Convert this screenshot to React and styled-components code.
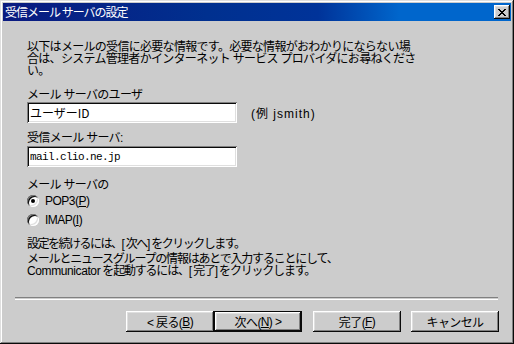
import styled, { createGlobalStyle } from "styled-components";

const GlobalStyle = createGlobalStyle`
  html, body {
    margin: 0;
    padding: 0;
    background: #cccccc;
  }
  body {
    font-family: "Liberation Sans", "Noto Sans CJK JP", sans-serif;
    font-size: 12px;
    color: #000;
  }
`;

const Window = styled.div`
  width: 514px;
  height: 344px;
  box-sizing: border-box;
  padding: 3px;
  background: #cccccc;
  box-shadow: inset -1px -1px #0a0a0a, inset 1px 1px #dfdfdf,
    inset -2px -2px #808080, inset 2px 2px #ffffff;
  display: flex;
  flex-direction: column;
`;

const TitleBar = styled.div`
  height: 18px;
  display: flex;
  align-items: center;
  justify-content: space-between;
  padding: 0 1px 0 2px;
  background: linear-gradient(
    90deg,
    #0a1a80 0%,
    #00308f 40%,
    #003399 62%,
    #0066cc 78%,
    #0066cc 100%
  );
  color: #fff;
`;

const TitleText = styled.span`
  font-family: "Noto Sans CJK JP", sans-serif;
  font-size: 12px;
  letter-spacing: -1px;
  line-height: 18px;
  white-space: nowrap;
`;

const CloseButton = styled.div`
  width: 16px;
  height: 14px;
  display: flex;
  align-items: center;
  justify-content: center;
  background: #cccccc;
  box-shadow: inset -1px -1px #0a0a0a, inset 1px 1px #ffffff,
    inset -2px -2px #808080, inset 2px 2px #dfdfdf;
`;

const Content = styled.div`
  display: flex;
  flex-direction: column;
  align-items: flex-start;
  padding: 20px 0 0 24px;
`;

const Text = styled.div`
  font-family: "Liberation Sans", "Noto Sans CJK JP", sans-serif;
  line-height: 12px;
  white-space: nowrap;
  letter-spacing: ${(p) => p.$spacing ?? "-0.7px"};
  margin-top: ${(p) => p.$top ?? 0}px;
`;

const Latin = styled.span`
  letter-spacing: ${(p) => p.$spacing ?? "-0.4px"};
`;

const FieldRow = styled.div`
  display: flex;
  align-items: center;
  gap: 14px;
  margin-top: ${(p) => p.$top ?? 0}px;
`;

const TextField = styled.input`
  width: 210px;
  height: 21px;
  box-sizing: border-box;
  border: none;
  outline: none;
  margin: 0;
  padding: 0 0 0 3px;
  background: #fff;
  color: #000;
  font-family: ${(p) =>
    p.$mono
      ? '"Liberation Mono", monospace'
      : '"Noto Sans CJK JP", sans-serif'};
  font-size: ${(p) => (p.$mono ? "11px" : "12px")};
  letter-spacing: ${(p) => (p.$mono ? "-0.6px" : "0")};
  box-shadow: inset 1px 1px #808080, inset -1px -1px #ffffff,
    inset 2px 2px #0a0a0a, inset -2px -2px #dfdfdf;
`;

const Hint = styled.span`
  white-space: nowrap;
  letter-spacing: 1px;
`;

const RadioGroup = styled.div`
  display: flex;
  flex-direction: column;
  gap: 2px;
  margin-top: 1px;
`;

const RadioRow = styled.label`
  display: flex;
  align-items: center;
  gap: 6px;
  height: 17px;
`;

const RadioDot = styled.span`
  position: relative;
  width: 12px;
  height: 12px;
  border-radius: 50%;
  background: #fff;
  box-shadow: inset 1px 1px #808080, inset -1px -1px #ffffff,
    inset 2px 2px #0a0a0a, inset -2px -2px #dfdfdf;

  &::after {
    content: "";
    display: ${(p) => (p.$checked ? "block" : "none")};
    position: absolute;
    left: 4px;
    top: 4px;
    width: 4px;
    height: 4px;
    border-radius: 50%;
    background: #000;
  }
`;

const RadioLabel = styled.span`
  letter-spacing: -0.5px;
  line-height: 12px;
`;

const Footer = styled.div`
  margin-top: auto;
  display: flex;
  flex-direction: column;
  padding-bottom: 9px;
`;

const Separator = styled.div`
  height: 1px;
  margin: 0 13px 11px 12px;
  border-top: 1px solid #808080;
  border-bottom: 1px solid #ffffff;
`;

const ButtonRow = styled.div`
  display: flex;
  justify-content: flex-end;
  padding-right: 12px;
`;

const ButtonPair = styled.div`
  display: flex;
  margin-right: ${(p) => p.$gap ?? 0}px;
`;

const Button = styled.div`
  width: 88px;
  height: 21px;
  display: flex;
  align-items: center;
  justify-content: center;
  margin-right: ${(p) => p.$gap ?? 0}px;
  background: #cccccc;
  font-family: "Liberation Sans", "Noto Sans CJK JP", sans-serif;
  font-size: 12px;
  letter-spacing: -0.6px;
  white-space: nowrap;
  box-shadow: ${(p) =>
    p.$default
      ? "inset 0 0 0 1px #0a0a0a, inset -2px -2px #0a0a0a, inset 2px 2px #ffffff, inset -3px -3px #808080, inset 3px 3px #dfdfdf"
      : "inset -1px -1px #0a0a0a, inset 1px 1px #ffffff, inset -2px -2px #808080, inset 2px 2px #dfdfdf"};

  u {
    text-decoration-thickness: 1px;
    text-underline-offset: 1px;
  }
`;

const CloseIcon = () => (
  <svg width="8" height="7" viewBox="0 0 8 7" shapeRendering="crispEdges">
    <path
      fill="#000"
      d="M0 0h2v1H0zM6 0h2v1H6zM1 1h2v1H1zM5 1h2v1H5zM2 2h4v1H2zM3 3h2v1H3zM2 4h4v1H2zM1 5h2v1H1zM5 5h2v1H5zM0 6h2v1H0zM6 6h2v1H6z"
    />
  </svg>
);

export default function App() {
  return (
    <>
      <GlobalStyle />
      <Window>
        <TitleBar>
          <TitleText>受信メール サーバの設定</TitleText>
          <CloseButton>
            <CloseIcon />
          </CloseButton>
        </TitleBar>

        <Content>
          <Text>
            以下はメールの受信に必要な情報です。必要な情報がおわかりにならない場
            <br />
            合は、システム管理者かインターネット サービス プロバイダにお尋ねくださ
            <br />
            い。
          </Text>

          <Text $top={12}>メール サーバのユーザ</Text>
          <FieldRow $top={1}>
            <TextField defaultValue="ユーザーID" />
            <Hint>(例 jsmith)</Hint>
          </FieldRow>

          <Text $top={9}>受信メール サーバ:</Text>
          <FieldRow $top={2}>
            <TextField $mono defaultValue="mail.clio.ne.jp" />
          </FieldRow>

          <Text $top={12}>メール サーバの</Text>
          <RadioGroup>
            <RadioRow>
              <RadioDot $checked />
              <RadioLabel>
                POP3(<u>P</u>)
              </RadioLabel>
            </RadioRow>
            <RadioRow>
              <RadioDot />
              <RadioLabel>
                IMAP(<u>I</u>)
              </RadioLabel>
            </RadioRow>
          </RadioGroup>

          <Text $top={10} $spacing="-1.5px">
            設定を続けるには、<Latin $spacing="1px">[</Latin>次へ
            <Latin $spacing="1px">]</Latin>をクリックします。
          </Text>
          <Text $top={3} $spacing="-1.2px">
            メールとニュースグループの情報はあとで入力することにして、
            <br />
            <Latin>Communicator</Latin> を起動するには、
            <Latin $spacing="1px">[</Latin>完了<Latin $spacing="1px">]</Latin>
            をクリックします。
          </Text>
        </Content>

        <Footer>
          <Separator />
          <ButtonRow>
            <ButtonPair $gap={11}>
              <Button>
                &lt; 戻る(<u>B</u>)
              </Button>
              <Button $default>
                次へ(<u>N</u>) &gt;
              </Button>
            </ButtonPair>
            <Button $gap={10}>
              完了(<u>F</u>)
            </Button>
            <Button>キャンセル</Button>
          </ButtonRow>
        </Footer>
      </Window>
    </>
  );
}
